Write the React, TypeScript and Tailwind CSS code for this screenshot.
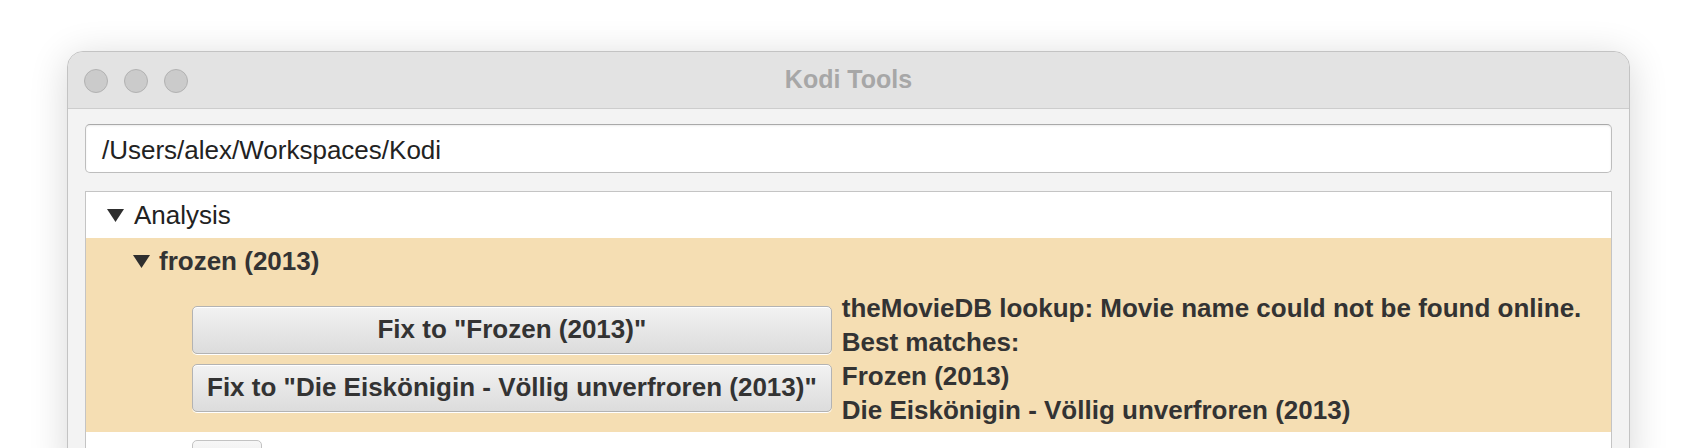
import React from "react";

const Tri = () => (
  <svg width="17" height="13" viewBox="0 0 17 13" className="shrink-0">
    <polygon points="0,0 17,0 8.5,13" fill="#2e2e2e" />
  </svg>
);

const btn =
  "h-[48px] w-full rounded-[5px] border border-[#b3b3b3] bg-gradient-to-b from-[#f2f2f2] to-[#dcdcdc] shadow-[inset_0_1px_0_#ffffff,0_1px_0_#ffffff] px-[14px] text-[26px] font-bold text-[#333333] flex items-center justify-center whitespace-nowrap";

export default function App() {
  return (
    <div
      className="h-[448px] overflow-hidden bg-white pt-[51px] pl-[67px] pr-[68px]"
      style={{ fontFamily: '"Liberation Sans", Arial, sans-serif' }}
    >
      <div className="h-[420px] rounded-t-[16px] border border-[#c3c3c3] bg-[#f3f3f3] shadow-[0_6px_38px_rgba(0,0,0,0.16)] overflow-hidden">
        {/* title bar */}
        <div className="relative h-[57px] border-b border-[#cdcdcd] bg-[#e3e3e3] rounded-t-[15px] flex items-center">
          <div className="flex gap-[16px] pl-[16px] pt-[1px]">
            <div className="h-[24px] w-[24px] rounded-full border border-[#b2b2b2] bg-[#cbcbcb]" />
            <div className="h-[24px] w-[24px] rounded-full border border-[#b2b2b2] bg-[#cbcbcb]" />
            <div className="h-[24px] w-[24px] rounded-full border border-[#b2b2b2] bg-[#cbcbcb]" />
          </div>
          <div className="absolute inset-0 flex items-center justify-center text-[25px] font-bold text-[#a7a7a7] pb-[1px]">
            Kodi Tools
          </div>
        </div>

        <div className="px-[17px] pt-[15px]">
          {/* path field */}
          <div className="h-[49px] rounded-[5px] border border-[#bdbdbd] border-t-[#a9a9a9] bg-white shadow-[inset_0_1px_2px_rgba(0,0,0,0.08)] flex items-center pl-[16px] pt-[3px] text-[26px] text-[#222222]">
            /Users/alex/Workspaces/Kodi
          </div>

          {/* tree */}
          <div className="mt-[18px] h-[300px] border border-[#c4c4c4] bg-white">
            <div className="h-[46px] flex items-center pl-[21px] gap-[10px] pt-[1px] text-[26px] text-[#222222]">
              <Tri />
              <span>Analysis</span>
            </div>
            <div className="bg-[#f5deb3]">
              <div className="h-[47px] flex items-center pl-[47px] gap-[9px] text-[26px] font-bold text-[#333333]">
                <Tri />
                <span>frozen (2013)</span>
              </div>
              <div className="flex items-center pl-[106px] gap-[10px] pt-[5px] pb-[5px]">
                <div className="flex flex-col gap-[10px]">
                  <div className={btn}>Fix to "Frozen (2013)"</div>
                  <div className={btn}>Fix to "Die Eiskönigin - Völlig unverfroren (2013)"</div>
                </div>
                <div className="text-[26px] font-bold leading-[34px] pt-[1px] text-[#333333] whitespace-nowrap">
                  <div>theMovieDB lookup: Movie name could not be found online.</div>
                  <div>Best matches:</div>
                  <div>Frozen (2013)</div>
                  <div>Die Eiskönigin - Völlig unverfroren (2013)</div>
                </div>
              </div>
            </div>
            <div className="pl-[106px] pt-[8px]">
              <div className="h-[48px] w-[70px] rounded-[5px] border border-[#c3c3c3] bg-gradient-to-b from-[#f7f7f7] to-[#e3e3e3]" />
            </div>
          </div>
        </div>
      </div>
    </div>
  );
}
